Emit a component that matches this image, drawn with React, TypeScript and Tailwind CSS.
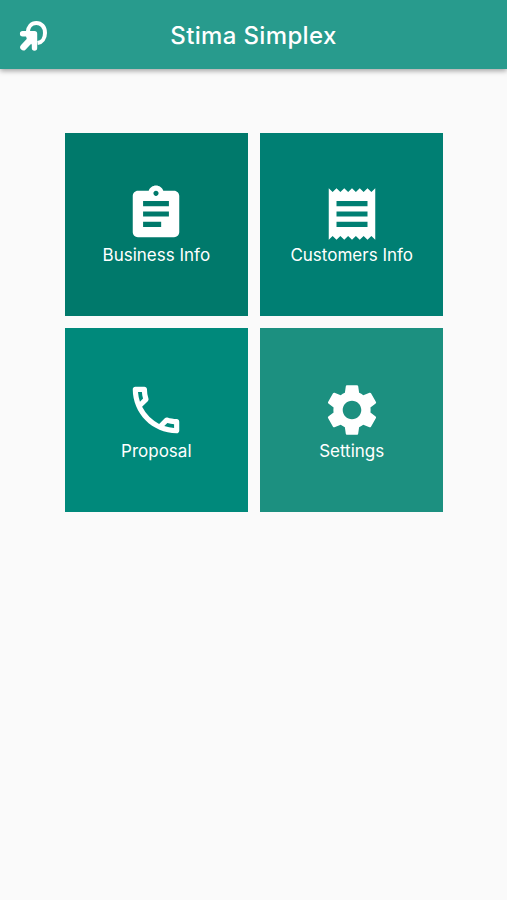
import React from 'react';
import type { IconType } from 'react-icons';
import { MdAssignment, MdReceipt, MdOutlinePhone, MdSettings } from 'react-icons/md';

type Tile = {
  label: string;
  icon: IconType;
  color: string;
};

const tiles: Tile[] = [
  { label: 'Business Info', icon: MdAssignment, color: 'bg-[#00796b]' },
  { label: 'Customers Info', icon: MdReceipt, color: 'bg-[#007f73]' },
  { label: 'Proposal', icon: MdOutlinePhone, color: 'bg-[#00897b]' },
  { label: 'Settings', icon: MdSettings, color: 'bg-[#1c9080]' },
];

function Logo() {
  return (
    <svg width="30" height="32" viewBox="0 0 30 32" fill="none" stroke="white" aria-hidden="true">
      <path d="M9.7 12.5C10 6.8 13.5 2.9 18.3 2.9C23.3 2.9 27 7 27 12.9C27 18.3 24 22.3 19.5 23" strokeWidth="4" />
      {/* arrow */}
      <path d="M4.6 13.7H16.5V28" strokeWidth="5.4" strokeLinecap="round" strokeLinejoin="round" />
      <path d="M8 14H16.5V24L10.5 23.5Z" fill="white" strokeWidth="1" />
      <path d="M15 17L5.4 27.2" strokeWidth="6.4" strokeLinecap="round" />
    </svg>
  );
}

export default function App() {
  return (
    <div className="min-h-screen bg-[#fafafa] font-['Inter','Liberation_Sans',sans-serif] text-white">
      <header className="grid h-[69px] grid-cols-[1fr_auto_1fr] items-center bg-[#289b8d] px-[18px] shadow-[0_2px_5px_rgba(0,0,0,0.35)]">
        <button className="w-[30px] pt-[3px]" aria-label="Home">
          <Logo />
        </button>
        <h1 className="pt-0.5 text-2xl font-medium tracking-[0.35px]">Stima Simplex</h1>
      </header>

      <main className="grid grid-cols-[183.4px_183.4px] justify-center gap-x-3 gap-y-3 pt-16 pl-px">
        {tiles.map(({ label, icon: Icon, color }) => (
          <button key={label} className={`flex h-[183.4px] flex-col items-center pt-[50.3px] ${color}`}>
            <Icon size={62} />
            <span className="text-[17px] leading-5">{label}</span>
          </button>
        ))}
      </main>
    </div>
  );
}
